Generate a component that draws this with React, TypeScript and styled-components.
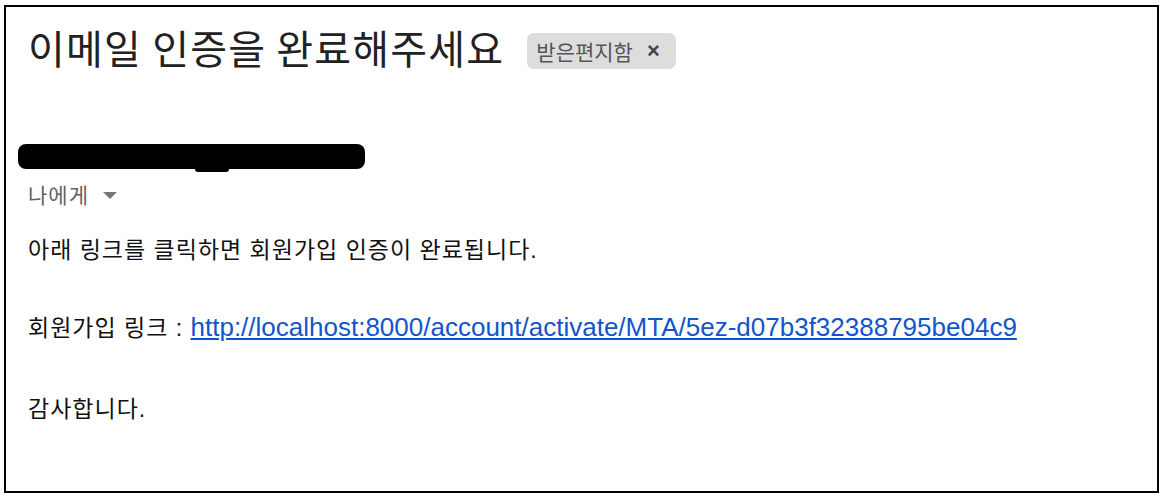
import React from "react";
import styled, { createGlobalStyle } from "styled-components";

const Global = createGlobalStyle`
  html, body { margin: 0; padding: 0; background: #ffffff; }
  body { font-family: "Liberation Sans", "Noto Sans CJK KR", sans-serif; color: #222; }
`;

const Frame = styled.div`
  box-sizing: border-box;
  margin: 5px 0 0 4px;
  width: 1155px;
  height: 488px;
  border: 2px solid #000;
  padding: 10px 0 0 22px;
  display: flex;
  flex-direction: column;
`;

const TitleRow = styled.div`
  display: flex;
  align-items: center;
  gap: 23px;
  height: 60px;
`;

const Title = styled.h1`
  margin: 0;
  font-family: "Noto Sans CJK KR", sans-serif;
  font-weight: 400;
  font-size: 40px;
  letter-spacing: 1.2px;
  color: #222;
`;

const Badge = styled.span`
  display: inline-flex;
  align-items: center;
  gap: 14px;
  height: 36px;
  padding: 0 16px 0 9px;
  margin-top: 7px;
  border-radius: 7px;
  background: #dddddd;
  color: #555;
  font-family: "Noto Sans CJK KR", sans-serif;
  font-size: 21px;
`;

const Close = styled.span`
  font-family: "Liberation Sans", sans-serif;
  font-weight: 700;
  font-size: 22px;
  color: #444;
`;

const Sender = styled.div`
  margin-top: 67px;
  margin-left: -10px;
  position: relative;
  width: 347px;
  height: 25px;
  border-radius: 8px;
  background: #000;
  &::after {
    content: "";
    position: absolute;
    left: 177px;
    top: 22px;
    width: 34px;
    height: 6px;
    border-radius: 3px;
    background: #000;
  }
`;

const Recipient = styled.div`
  display: flex;
  align-items: center;
  gap: 14px;
  margin-top: 10px;
  font-family: "Noto Sans CJK KR", sans-serif;
  font-size: 21px;
  letter-spacing: 1px;
  color: #5f6368;
`;

const Caret = styled.span`
  width: 0;
  height: 0;
  border-left: 7px solid transparent;
  border-right: 7px solid transparent;
  border-top: 7px solid #777;
  margin-top: 2px;
`;

const Body = styled.div`
  margin-top: 26px;
  display: flex;
  flex-direction: column;
  font-size: 23px;
  letter-spacing: 1px;
  color: #111;
`;

const Para = styled.p<{ $after: number }>`
  margin: 0 0 ${(p) => p.$after}px;
  line-height: 30px;
`;

const Link = styled.a`
  color: #1155cc;
  font-size: 26px;
  letter-spacing: 0;
  text-decoration: underline;
`;

export default function App() {
  return (
    <>
      <Global />
      <Frame>
        <TitleRow>
          <Title>이메일 인증을 완료해주세요</Title>
          <Badge>
            받은편지함 <Close>×</Close>
          </Badge>
        </TitleRow>
        <Sender />
        <Recipient>
          나에게 <Caret />
        </Recipient>
        <Body>
          <Para $after={47}>아래 링크를 클릭하면 회원가입 인증이 완료됩니다.</Para>
          <Para $after={51}>
            회원가입 링크 :{" "}
            <Link href="#">http://localhost:8000/account/activate/MTA/5ez-d07b3f32388795be04c9</Link>
          </Para>
          <Para $after={0}>감사합니다.</Para>
        </Body>
      </Frame>
    </>
  );
}
